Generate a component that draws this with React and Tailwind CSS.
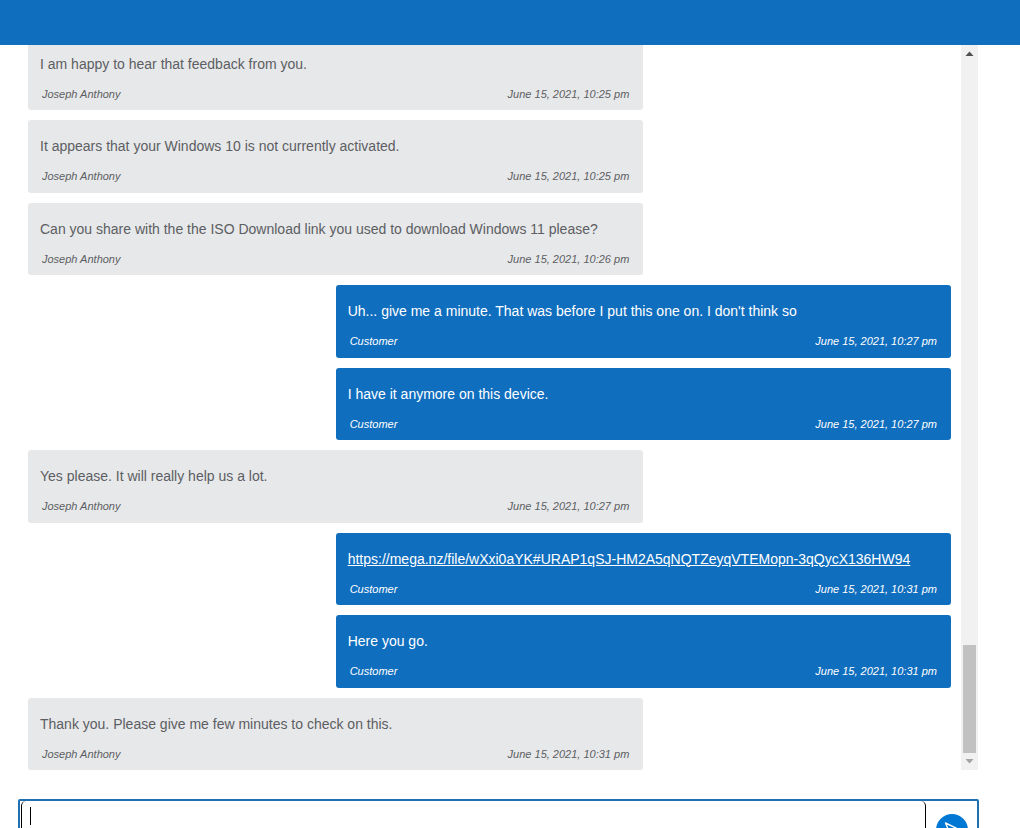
import React from "react";

const agent = "Joseph Anthony";

const messages = [
  { id: 1, from: agent, text: "I am happy to hear that feedback from you.", time: "June 15, 2021, 10:25 pm" },
  { id: 2, from: agent, text: "It appears that your Windows 10 is not currently activated.", time: "June 15, 2021, 10:25 pm" },
  { id: 3, from: agent, text: "Can you share with the the ISO Download link you used to download Windows 11 please?", time: "June 15, 2021, 10:26 pm" },
  { id: 4, from: "Customer", text: "Uh... give me a minute. That was before I put this one on. I don't think so", time: "June 15, 2021, 10:27 pm" },
  { id: 5, from: "Customer", text: "I have it anymore on this device.", time: "June 15, 2021, 10:27 pm" },
  { id: 6, from: agent, text: "Yes please. It will really help us a lot.", time: "June 15, 2021, 10:27 pm" },
  { id: 7, from: "Customer", text: "https://mega.nz/file/wXxi0aYK#URAP1qSJ-HM2A5qNQTZeyqVTEMopn-3qQycX136HW94", time: "June 15, 2021, 10:31 pm" },
  { id: 8, from: "Customer", text: "Here you go.", time: "June 15, 2021, 10:31 pm" },
  { id: 9, from: agent, text: "Thank you. Please give me few minutes to check on this.", time: "June 15, 2021, 10:31 pm" },
];

const Message = ({ message }) => {
  const isCustomer = message.from === "Customer";
  const isLink = message.text.startsWith("https://");

  return (
    <li
      className={`w-2/3 shrink-0 rounded-[3px] px-3 pt-4 pb-2 ${
        isCustomer ? "self-end bg-[#106ebe] text-white" : "bg-[#e7e8ea] text-[#5c5e62]"
      }`}
    >
      <p className="text-sm leading-5">
        {isLink ? (
          <a href={message.text} className="underline">
            {message.text}
          </a>
        ) : (
          message.text
        )}
      </p>
      <div className="mt-3 flex justify-between px-0.5 text-[11px] leading-normal italic">
        <span>{message.from}</span>
        <time>{message.time}</time>
      </div>
    </li>
  );
};

const Scrollbar = () => (
  <div className="flex w-[17px] shrink-0 flex-col items-center bg-[#f1f1f1]" aria-hidden="true">
    <svg className="h-[17px] w-[17px] shrink-0" viewBox="0 0 17 17">
      <path d="M4.5 11h8L8.5 6.5z" fill="#505050" />
    </svg>
    <div className="flex w-full flex-1 flex-col justify-end px-0.5">
      <div className="h-[108px] bg-[#c1c1c1]" />
    </div>
    <svg className="h-[17px] w-[17px] shrink-0" viewBox="0 0 17 17">
      <path d="M4.5 6h8L8.5 10.5z" fill="#a3a3a3" />
    </svg>
  </div>
);

const Composer = () => (
  <form
    className="mt-[29px] mr-[41px] -mb-[35px] ml-[18px] flex h-16 shrink-0 rounded-[2px] border-2 border-[#1f6fb2] pl-px"
    onSubmit={(e) => e.preventDefault()}
  >
    <div className="relative flex flex-1">
      <textarea
        aria-label="Message"
        className="w-full resize-none rounded-[5px] border border-t-0 border-black bg-white px-2 py-1 text-sm leading-5 caret-transparent outline-none"
      />
      {/* Text cursor */}
      <span className="absolute top-[6px] left-[9px] h-[18px] w-px bg-black" />
    </div>
    <div className="flex w-[51px] shrink-0 justify-center pt-[13px]">
      <button
        type="submit"
        aria-label="Send"
        className="flex h-8 w-8 items-center justify-center rounded-full bg-[#0078d4] text-white"
      >
        <svg className="h-5 w-5" viewBox="0 0 20 20" fill="none" stroke="currentColor" strokeWidth="1.4">
          <path d="M3.5 3L18 10L3.5 17L6.5 10ZM6.5 10H18" strokeLinejoin="round" />
        </svg>
      </button>
    </div>
  </form>
);

const App = () => {
  return (
    <div className="flex h-screen flex-col overflow-hidden bg-white font-['Liberation_Sans',Arial,sans-serif]">
      <header className="h-[45px] shrink-0 bg-[#106ebe]" />

      {/* Conversation, pinned to the latest message */}
      <main className="mr-[42px] ml-7 flex min-h-0 flex-1">
        <ul className="mr-2.5 flex flex-1 flex-col justify-end gap-2.5 overflow-hidden">
          {messages.map((message) => (
            <Message key={message.id} message={message} />
          ))}
        </ul>
        <Scrollbar />
      </main>

      <Composer />
    </div>
  );
};

export default App;
